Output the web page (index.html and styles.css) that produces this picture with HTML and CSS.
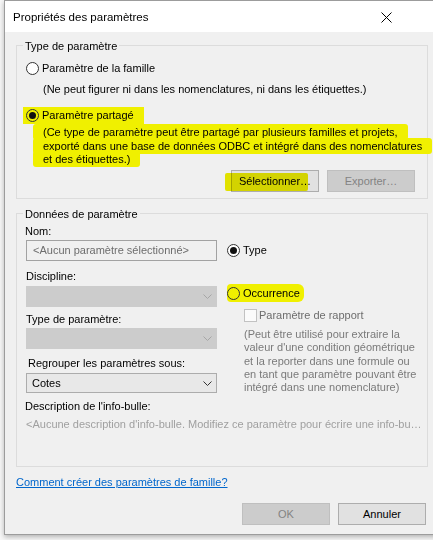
FILE: index.html
```html
<!DOCTYPE html>
<html lang="fr">
<head>
<meta charset="utf-8">
<title>Propriétés des paramètres</title>
<link rel="stylesheet" href="styles.css">
</head>
<body>
<div class="window">
  <div class="titlebar">
    <span class="title">Propriétés des paramètres</span>
    <svg class="close" width="11" height="11" viewBox="0 0 11 11"><path d="M0.5 0.5 L10.5 10.5 M10.5 0.5 L0.5 10.5" stroke="#000" stroke-width="1" fill="none"/></svg>
  </div>
  <div class="content">
    <div class="group g1">
      <div class="legend">Type de paramètre</div>
      <div class="row r1"><span class="radio"></span><span>Paramètre de la famille</span></div>
      <p class="note n1">(Ne peut figurer ni dans les nomenclatures, ni dans les étiquettes.)</p>
      <div class="row r2"><span class="hl hl-shared"><span class="radio checked"></span><span>Paramètre partagé</span></span></div>
      <p class="note n2"><span class="hl-text">(Ce type de paramètre peut être partagé par plusieurs familles et projets,<br>exporté dans une base de données ODBC et intégré dans des nomenclatures<br>et des étiquettes.)</span></p>
      <div class="btns g1-btns">
        <button class="btn">Sélectionner…<span class="mark"></span></button>
        <button class="btn disabled">Exporter…</button>
      </div>
    </div>

    <div class="group g2">
      <div class="legend">Données de paramètre</div>
      <div class="cols">
        <div class="col-left">
          <div class="label l-nom">Nom:</div>
          <div class="input">&lt;Aucun paramètre sélectionné&gt;</div>
          <div class="label l-disc">Discipline:</div>
          <div class="select disabled s-disc"><span></span><svg width="9" height="5" viewBox="0 0 9 5"><path d="M0.5 0.5 L4.5 4.5 L8.5 0.5" stroke="#a6a6a6" fill="none"/></svg></div>
          <div class="label l-type">Type de paramètre:</div>
          <div class="select disabled s-type"><span></span><svg width="9" height="5" viewBox="0 0 9 5"><path d="M0.5 0.5 L4.5 4.5 L8.5 0.5" stroke="#a6a6a6" fill="none"/></svg></div>
          <div class="label l-group">Regrouper les paramètres sous:</div>
          <div class="select s-cotes"><span>Cotes</span><svg width="9" height="5" viewBox="0 0 9 5"><path d="M0.5 0.5 L4.5 4.5 L8.5 0.5" stroke="#333" fill="none"/></svg></div>
        </div>
        <div class="col-right">
          <div class="row r-type"><span class="radio checked"></span><span>Type</span></div>
          <div class="row r-occ"><span class="hl hl-occ"><span class="radio"></span><span>Occurrence</span></span></div>
          <div class="row r-check"><span class="checkbox"></span><span>Paramètre de rapport</span></div>
          <p class="gray-note">(Peut être utilisé pour extraire la<br>valeur d'une condition géométrique<br>et la reporter dans une formule ou<br>en tant que paramètre pouvant être<br>intégré dans une nomenclature)</p>
        </div>
      </div>
      <div class="label l-desc">Description de l'info-bulle:</div>
      <div class="desc-ph">&lt;Aucune description d'info-bulle. Modifiez ce paramètre pour écrire une info-bu…</div>
    </div>

    <a class="link" href="#">Comment créer des paramètres de famille?</a>

    <div class="btns foot-btns">
      <button class="btn disabled">OK</button>
      <button class="btn">Annuler</button>
    </div>
  </div>
</div>
</body>
</html>
```

FILE: styles.css
```css
html, body {
  margin: 0;
  padding: 0;
}
body {
  width: 433px;
  height: 540px;
  overflow: hidden;
  background: #f7f7f7;
  font-family: "Liberation Sans", Arial, sans-serif;
  font-size: 11px;
  line-height: 16px;
  color: #000;
}
.window {
  margin-left: 4px;
  width: 434px;
  border: 1px solid #9c9c9c;
  background: #f0f0f0;
  box-shadow: 0 2px 5px rgba(0, 0, 0, 0.28);
}
.titlebar {
  height: 31px;
  background: #fff;
  display: flex;
  align-items: center;
  justify-content: space-between;
  padding-left: 8px;
}
.title {
  font-size: 11.5px;
}
.close {
  margin-right: 47px;
  margin-top: 1px;
}
.content {
  display: flex;
  flex-direction: column;
  padding: 0 0 9px 0;
}
.group {
  margin: 13px 11px 0 11px;
  border: 1px solid #dcdcdc;
  display: flex;
  flex-direction: column;
}
.legend {
  margin: -8px 0 0 6px;
  padding: 0 2px;
  width: fit-content;
  background: #f0f0f0;
  line-height: 16px;
}
.row {
  display: flex;
  align-items: center;
  height: 16px;
}
.row > span + span,
.hl > span + span {
  margin-left: 3px;
}
.radio {
  width: 13px;
  height: 13px;
  box-sizing: border-box;
  border: 1px solid #333;
  border-radius: 50%;
  background: #fff;
  display: inline-flex;
  align-items: center;
  justify-content: center;
  flex: none;
}
.radio.checked::after {
  content: "";
  width: 7px;
  height: 7px;
  border-radius: 50%;
  background: #111;
}
.hl {
  display: inline-flex;
  align-items: center;
  background: #f0f000;
}
.hl .radio {
  background: transparent;
}
.g1 .r1 {
  margin: 6px 0 0 9px;
}
.note {
  margin: 0;
  white-space: nowrap;
}
.n1 {
  margin: 5px 0 0 26px;
}
.g1 .r2 {
  margin: 10px 0 0 6px;
}
.hl-shared {
  height: 17px;
  padding: 0 10px 0 3px;
}
.n2 {
  margin: 3px 0 0 16px;
  line-height: 13.5px;
}
.hl-text {
  background: #f0f000;
  padding: 2px 10px;
  -webkit-box-decoration-break: clone;
  box-decoration-break: clone;
  border-radius: 3px;
}
.btns {
  display: flex;
  justify-content: flex-end;
  gap: 8px;
}
.g1-btns {
  margin-top: 3.5px;
  padding: 0 12px 6px 0;
}
.btn {
  position: relative;
  width: 88px;
  height: 22px;
  padding: 0;
  box-sizing: border-box;
  border: 1px solid #adadad;
  background: #e1e1e1;
  font-family: inherit;
  font-size: 11px;
  font-weight: normal;
  color: #000;
}
.btn.disabled {
  background: #cccccc;
  border-color: #bfbfbf;
  color: #838383;
}
.mark {
  position: absolute;
  left: -7px;
  top: 2px;
  width: 83px;
  height: 18px;
  background: #f0f000;
  mix-blend-mode: multiply;
  border-radius: 2px;
}
.g2 {
  margin-top: 14px;
}
.cols {
  display: grid;
  grid-template-columns: 191px 1fr;
  column-gap: 10px;
  padding-left: 9px;
}
.col-left,
.col-right {
  display: flex;
  flex-direction: column;
}
.label {
  height: 16px;
}
.l-nom {
  margin-top: 1px;
  margin-left: -1px;
}
.input {
  margin-top: 1px;
  height: 21px;
  box-sizing: border-box;
  border: 1px solid #a2a2a2;
  padding-left: 6px;
  line-height: 19px;
  color: #6d6d6d;
}
.l-disc {
  margin-top: 7px;
}
.select {
  height: 21px;
  box-sizing: border-box;
  display: flex;
  align-items: center;
  justify-content: space-between;
  padding: 0 4px 0 5px;
  border: 1px solid #acacac;
  background: #e8e8e8;
}
.select.disabled {
  background: #cccccc;
  border-color: #cccccc;
}
.s-disc {
  margin-top: 2px;
}
.l-type {
  margin-top: 4px;
}
.s-type {
  margin-top: 1px;
}
.l-group {
  margin-top: 6px;
  margin-left: 2px;
}
.s-cotes {
  margin-top: 2px;
  height: 20px;
}
.r-type {
  margin-top: 20px;
}
.r-occ {
  margin-top: 27px;
}
.hl-occ {
  height: 18px;
  padding: 0 4px 0 0;
  border-radius: 4px 6px 6px 4px;
}
.r-check {
  margin: 6px 0 0 17px;
  color: #6d6d6d;
}
.r-check > span + span {
  margin-left: 2px;
}
.checkbox {
  width: 13px;
  height: 13px;
  box-sizing: border-box;
  border: 1px solid #c2c2c2;
  background: #fbfbfb;
  flex: none;
}
.gray-note {
  margin: 5px 0 0 17px;
  line-height: 13.3px;
  color: #7a7a7a;
  white-space: nowrap;
}
.l-desc {
  margin: 4px 0 0 8px;
}
.desc-ph {
  margin: 2px 0 0 9px;
  padding-bottom: 34px;
  color: #a0a0a0;
  white-space: nowrap;
  height: 16px;
}
.link {
  margin: 7px 0 0 11px;
  width: fit-content;
  color: #0066cc;
  text-decoration: underline;
}
.foot-btns {
  margin-top: 13px;
  padding-right: 13px;
}
```
